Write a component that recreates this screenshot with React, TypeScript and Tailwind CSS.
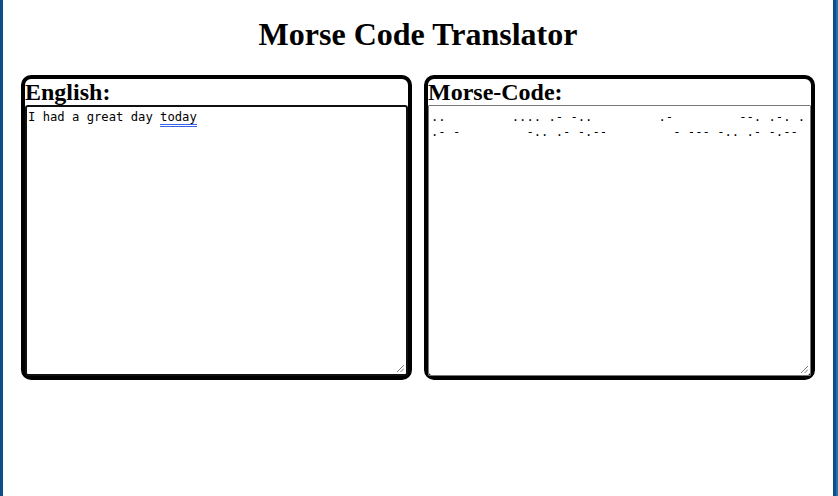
const SP = '         ';

const morseLines = [
  `..${SP}.... .- -..${SP}.-${SP}--. .-. .`,
  `.- -${SP}-.. .- -.--${SP}- --- -.. .- -.--`,
];

function Grip() {
  return (
    <svg
      width="8"
      height="8"
      viewBox="0 0 8 8"
      className="absolute bottom-[2px] right-[2px]"
    >
      <line x1="1" y1="8" x2="8" y2="1" stroke="#7a7a7a" strokeWidth="1" />
      <line x1="4.5" y1="8" x2="8" y2="4.5" stroke="#7a7a7a" strokeWidth="1" />
    </svg>
  );
}

type PanelProps = {
  title: string;
  focused?: boolean;
  children: React.ReactNode;
};

function Panel({ title, focused, children }: PanelProps) {
  return (
    <section className="flex h-[305px] flex-col rounded-[10px] border-4 border-black bg-white">
      <h2 className="m-0 font-['Liberation_Serif',serif] text-[24px] font-bold leading-[26px] text-black">
        {title}
      </h2>
      <div
        className={`relative flex-1 font-['DejaVu_Sans_Mono',monospace] text-[12.2px] leading-[15px] whitespace-pre text-black ${
          focused
            ? 'rounded-[3px] border-2 border-[#101010] pl-[1px] pt-[3px]'
            : 'rounded-[1px] border border-[#767676] px-[2px] pt-[4px]'
        }`}
      >
        {children}
        <Grip />
      </div>
    </section>
  );
}

export default function App() {
  return (
    <div className="flex h-[496px] w-[838px] border-r-2 border-[#2a6fae] bg-[#0c4f87] pl-[3px] pr-[3px]">
      <main className="flex-1 bg-white">
        <h1 className="mb-[22px] mt-[16px] text-center font-['Liberation_Serif',serif] text-[32px] font-bold leading-[37px] text-black">
          Morse Code Translator
        </h1>
        <div className="grid grid-cols-2 gap-[12px] px-[18px]">
          <Panel title="English:" focused>
            I had a great day{' '}
            <span className="border-b-[3px] border-double border-[#3b63e6]">
              today
            </span>
          </Panel>
          <Panel title="Morse-Code:">
            {morseLines.join('\n')}
          </Panel>
        </div>
      </main>
    </div>
  );
}
